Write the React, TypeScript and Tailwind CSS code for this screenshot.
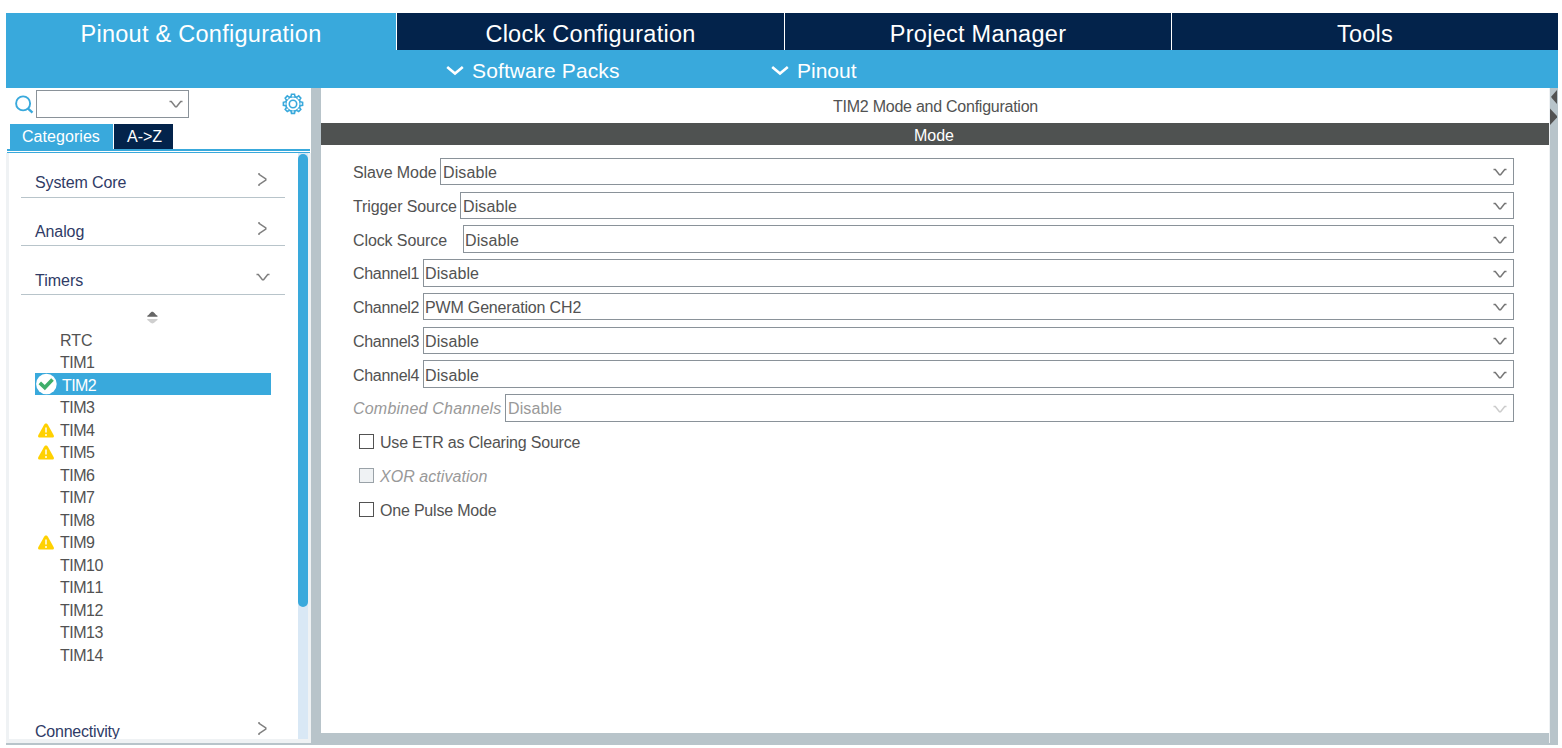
import React from "react";

type PeripheralStatus = "ok" | "warning";

interface Peripheral {
  name: string;
  status?: PeripheralStatus;
}

interface ModeField {
  label: string;
  value: string;
  labelWidth: string;
  textInset: string;
  disabled?: boolean;
}

const peripherals: Peripheral[] = [
  { name: "RTC" },
  { name: "TIM1" },
  { name: "TIM2", status: "ok" },
  { name: "TIM3" },
  { name: "TIM4", status: "warning" },
  { name: "TIM5", status: "warning" },
  { name: "TIM6" },
  { name: "TIM7" },
  { name: "TIM8" },
  { name: "TIM9", status: "warning" },
  { name: "TIM10" },
  { name: "TIM11" },
  { name: "TIM12" },
  { name: "TIM13" },
  { name: "TIM14" },
];

const fields: ModeField[] = [
  { label: "Slave Mode", value: "Disable", labelWidth: "w-[87px]", textInset: "pl-[2px]" },
  { label: "Trigger Source", value: "Disable", labelWidth: "w-[107px]", textInset: "pl-[2px]" },
  { label: "Clock Source", value: "Disable", labelWidth: "w-[110px]", textInset: "pl-[1px]" },
  { label: "Channel1", value: "Disable", labelWidth: "w-[70px]", textInset: "pl-[1px]" },
  { label: "Channel2", value: "PWM Generation CH2", labelWidth: "w-[70px]", textInset: "pl-[1px]" },
  { label: "Channel3", value: "Disable", labelWidth: "w-[70px]", textInset: "pl-[1px]" },
  { label: "Channel4", value: "Disable", labelWidth: "w-[70px]", textInset: "pl-[1px]" },
  { label: "Combined Channels", value: "Disable", labelWidth: "w-[152px]", textInset: "pl-[2px]", disabled: true },
];

function ComboArrow({ className }: { className?: string }) {
  return (
    <svg className={className} width="14" height="9" viewBox="0 0 14 9" fill="none">
      <path d="M.5 1.500h1.800L6.400 6.800h1.200L11.700 1.500h1.800" stroke="currentColor" strokeWidth="1.500" />
    </svg>
  );
}

function BoldChevron() {
  return (
    <svg width="18" height="12" viewBox="0 0 18 12" fill="none">
      <path d="M1.200 2 9 8.500 16.800 2" stroke="white" strokeWidth="2.600" />
    </svg>
  );
}

function SearchIcon() {
  return (
    <svg width="20" height="20" viewBox="0 0 20 20" fill="none" stroke="#39a9dc">
      <circle cx="8.100" cy="8.400" r="7" strokeWidth="1.900" />
      <path d="M12.800 13.400 17.500 17.600" strokeWidth="2.400" />
    </svg>
  );
}

function GearIcon() {
  return (
    <svg width="22" height="22" viewBox="0 0 22 22" fill="none" stroke="#39a9dc">
      <path
        d="M9.500 1.200h3l.5 2.400 1.600.7 2.100-1.400 2.100 2.200-1.300 2 .7 1.700 2.400.5v3l-2.400.5-.7 1.600 1.300 2.100-2.100 2.100-2.100-1.300-1.600.6-.5 2.500h-3L9 17.900l-1.600-.6-2.100 1.300-2.100-2.100 1.300-2.100-.7-1.600-2.400-.5v-3l2.400-.5.7-1.700-1.300-2 2.100-2.200 2.100 1.400L9 3.600z"
        strokeWidth="1.600"
      />
      <circle cx="11" cy="11" r="7" strokeWidth="1" />
      <circle cx="11" cy="11" r="3.700" strokeWidth="1.600" />
    </svg>
  );
}

function CheckBadge() {
  return (
    <svg width="22" height="22" viewBox="0 0 22 22" fill="none">
      <circle cx="11.400" cy="11" r="10.300" fill="white" />
      <path d="M4.800 9.900 9.800 14.600 17.500 6.500" stroke="#3fae6a" strokeWidth="3.600" />
    </svg>
  );
}

function WarningIcon() {
  return (
    <svg width="16" height="15" viewBox="0 0 16 15">
      <path d="M8 .5c.8 0 1.400.3 1.900 1.200l5.700 10.400c.8 1.500.2 2.400-1.400 2.400H1.800c-1.600 0-2.200-.9-1.400-2.400L6.100 1.700C6.600.800 7.200.5 8 .5z" fill="#ffd100" />
      <path d="M8 4.500v5M8 11v2" stroke="#fff6cf" strokeWidth="1.800" />
    </svg>
  );
}

function SectionHeader({ title, open, className }: { title: string; open?: boolean; className: string }) {
  return (
    <div className={`ml-3 flex w-[264px] shrink-0 items-end justify-between border-[#b8c4ca] pl-3.5 text-[#2f3b66] ${className}`}>
      <span className="leading-5">{title}</span>
      {open ? (
        <ComboArrow className="mr-[15px] mb-[9px] text-[#808080]" />
      ) : (
        <svg className="mr-[17px]" width="10" height="15" viewBox="0 0 10 15" fill="none">
          <path d="M1 1v1.400L7.800 7v1L1 12.600v1.400" stroke="#808080" strokeWidth="1.500" />
        </svg>
      )}
    </div>
  );
}

function Sidebar() {
  return (
    <aside className="flex w-[305px] shrink-0 flex-col bg-white">
      <div className="flex h-9 shrink-0 items-start pl-[9px]">
        <div className="flex w-[21px] pt-[7px]">
          <SearchIcon />
        </div>
        <div className="mt-[2px] flex h-7 w-[153px] items-center justify-end border border-[#8a9299] pt-px pr-[5px]">
          <ComboArrow className="text-[#808080]" />
        </div>
        <div className="mt-[5px] ml-[93px]">
          <GearIcon />
        </div>
      </div>
      <div className="flex h-[25px] shrink-0 gap-px pl-1 leading-[25px] text-white">
        <div className="w-[103px] bg-[#39a9dc] pl-3 tracking-[0.05px]">Categories</div>
        <div className="w-[59px] bg-[#03234b] pl-[13px]">A-&gt;Z</div>
      </div>
      <div className="mr-px ml-px h-1 shrink-0 border-t-2 border-b border-[#39a9dc]" />
      <div className="flex min-h-0 flex-1 border-x-[3px] border-b-4 border-[#eff2f4]">
        <div className="flex min-w-0 flex-1 flex-col overflow-hidden">
          <SectionHeader title="System Core" className="h-[45px] border-b pb-1 tracking-[-0.1px] [&>svg]:mb-[6px]" />
          <SectionHeader title="Analog" className="h-[48px] border-b pb-[3px] tracking-[-0.1px] [&>svg]:mb-[6px]" />
          <SectionHeader title="Timers" open className="h-[49px] border-b pb-[3px]" />
          <div className="flex h-[33.4px] shrink-0 justify-center pt-[16px] pr-[3px]">
            <svg width="11" height="13" viewBox="0 0 11 13">
              <path d="M.3 5.800V4.800C2.500 3.500 3.500.700 5.300.700S8.200 3.500 10.500 4.800v1z" fill="#666" />
              <path d="M.3 8h10.200v1C8.300 10 7.200 12.500 5.400 12.500S2.500 10 .3 9z" fill="#cfcfcf" />
            </svg>
          </div>
          <ul className="ml-[26px] w-[236px] shrink-0 text-[#525252] [font-kerning:none]">
            {peripherals.map(({ name, status }) =>
              status === "ok" ? (
                <li key={name} className="flex h-[22.5px] items-start">
                  <div className="flex h-[22px] w-full items-center bg-[#39a9dc] text-white">
                    <CheckBadge />
                    <span className="pt-[3px] pl-[5px] leading-5 tracking-[-0.6px]">{name}</span>
                  </div>
                </li>
              ) : (
                <li key={name} className="flex h-[22.5px] items-center">
                  <span className="flex w-[25px] pt-px pl-[3px]">{status && <WarningIcon />}</span>
                  <span className={`pt-[2.200px] leading-5 ${name === "RTC" ? "tracking-[-0.2px]" : "tracking-[-0.5px]"}`}>
                    {name}
                  </span>
                </li>
              ),
            )}
          </ul>
          <SectionHeader title="Connectivity" className="mt-[50.500px] h-[26px] tracking-[-0.22px] [&>svg]:mb-[6px]" />
        </div>
        <div className="w-[10px] shrink-0 bg-[#d9e8f5] pt-px">
          <div className="h-[453px] rounded-full bg-[#39a9dc]" />
        </div>
      </div>
      <div className="h-[2px] shrink-0 bg-[#b8c4ca]" />
    </aside>
  );
}

function SelectRow({ field }: { field: ModeField }) {
  return (
    <div className="flex h-[33.75px] items-start">
      <span
        className={`shrink-0 pt-[5.200px] leading-5 whitespace-nowrap ${field.labelWidth} ${
          field.disabled
            ? "tracking-[0.21px] text-[#999] italic"
            : field.label.startsWith("Channel")
              ? "tracking-[-0.3px] text-[#525252]"
              : "tracking-[-0.1px] text-[#525252]"
        }`}
      >
        {field.label}
      </span>
      <div
        className={`flex h-[27.4px] flex-1 items-center justify-between border border-[#8a9299] pr-[6px] ${field.textInset} ${
          field.disabled ? "text-[#999]" : "text-[#525252]"
        }`}
      >
        <span className={`pt-[3.100px] leading-5 ${field.value === "Disable" ? "tracking-[0.1px]" : "tracking-[-0.17px]"}`}>
          {field.value}
        </span>
        <ComboArrow className={`mt-[2.400px] ${field.disabled ? "text-[#cccccc]" : "text-[#777]"}`} />
      </div>
    </div>
  );
}

function CheckRow({ label, disabled }: { label: string; disabled?: boolean }) {
  return (
    <div className="flex h-[33.75px] items-start gap-[6px] pl-[6px]">
      <span
        className={`mt-[6.200px] h-[15px] w-[15px] shrink-0 border ${
          disabled ? "border-[#9aa2a8] bg-[#eff2f4]" : "border-[#525252] bg-white"
        }`}
      />
      <span
        className={`pt-[5.500px] leading-5 ${
          disabled ? "tracking-[0.05px] text-[#999] italic" : "tracking-[-0.2px] text-[#525252]"
        }`}
      >
        {label}
      </span>
    </div>
  );
}

export default function App() {
  return (
    <div className="h-[748px] w-[1562px] overflow-hidden bg-white pt-[13px] pl-[6px] font-['Liberation_Sans',Arial,sans-serif] text-[16px]">
      <div className="flex h-[732px] w-[1552px] flex-col">
        <nav className="flex h-[37px] shrink-0 gap-px text-center text-[23.5px] leading-[42px] tracking-[0.27px] text-white">
          <div className="w-[390px] bg-[#39a9dc]">Pinout &amp; Configuration</div>
          <div className="w-[387px] bg-[#03234b]">Clock Configuration</div>
          <div className="w-[386px] bg-[#03234b]">Project Manager</div>
          <div className="w-[386px] bg-[#03234b]">Tools</div>
        </nav>
        <div className="flex h-[38px] shrink-0 items-center bg-[#39a9dc] pl-[440px] text-[21px] tracking-[0.12px] text-white">
          <div className="flex w-[325px] items-center gap-2 pt-[4px]">
            <BoldChevron />
            <span>Software Packs</span>
          </div>
          <div className="flex items-center gap-2 pt-[4px] tracking-normal">
            <BoldChevron />
            <span>Pinout</span>
          </div>
        </div>
        <div className="flex min-h-0 flex-1">
          <Sidebar />
          <div className="w-[10px] shrink-0 bg-[#b8c4ca]" />
          <main className="flex w-[1228px] flex-col border-b-[12px] border-[#b8c4ca] bg-white">
            <h1 className="h-[35px] shrink-0 pt-px pl-px text-center leading-[35px] tracking-[-0.25px] text-[#525252]">
              TIM2 Mode and Configuration
            </h1>
            <h2 className="h-[22px] shrink-0 bg-[#4f5251] pt-px pr-[2px] text-center leading-6 text-white">Mode</h2>
            <div className="pt-[12.900px] pr-[35px] pl-8">
              {fields.map((f) => (
                <SelectRow key={f.label} field={f} />
              ))}
              <CheckRow label="Use ETR as Clearing Source" />
              <CheckRow label="XOR activation" disabled />
              <CheckRow label="One Pulse Mode" />
            </div>
          </main>
          <div className="flex w-[9px] shrink-0 flex-col bg-[#b8c4ca] pb-[2px]">
            <div className="flex-1 border-l border-[#eff2f4]">
              <svg width="8" height="40" viewBox="0 0 8 40" fill="#525252">
                <path d="M7 2v14L1.500 9.800V8.200z" />
                <path d="M0 20.500 7 28v1.500L0 37z" />
              </svg>
            </div>
          </div>
        </div>
      </div>
    </div>
  );
}
